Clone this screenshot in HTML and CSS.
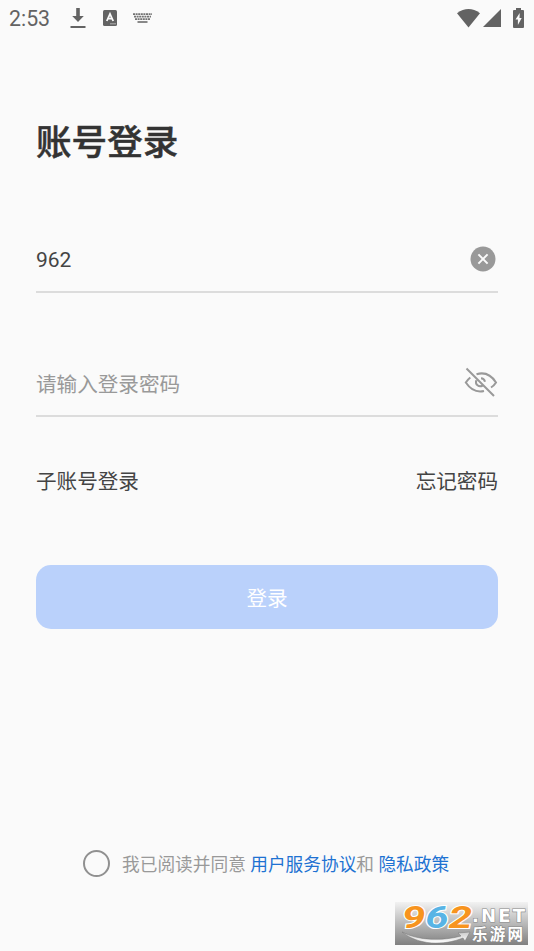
FILE: index.html
```html
<!DOCTYPE html>
<html lang="zh-CN">
<head>
<meta charset="utf-8">
<title>账号登录</title>
<link rel="stylesheet" href="styles.css">
</head>
<body>
<div class="screen">
  <header class="status">
    <span class="time">2:53</span>
    <svg class="download" width="16" height="20" viewBox="0 0 16 20"><path d="M6.2 0h3.6v8h4L8 14 2.2 8h4zM.5 18h15v2H.5z"/></svg>
    <svg class="badge" width="14" height="16" viewBox="0 0 14 16"><rect width="14" height="16" rx="1.5"/><path class="cut" d="M3.8 11 7 4l3.2 7M5 8.7h4"/><path class="dots" d="M7.5 13.8h5"/></svg>
    <svg class="keyboard" width="19" height="10" viewBox="0 0 19 10"><path d="M0 1.2h19M1 3.7h17M2 6.2h15" stroke-dasharray="2 .6"/><path d="M4.5 9h10"/></svg>
    <span class="signals">
      <svg width="23" height="19" viewBox="0 0 23 19"><path d="M0 4.2Q11.5-4.2 23 4.2L11.5 18.5z"/></svg>
      <svg class="cell" width="18" height="18" viewBox="0 0 18 18"><path d="M18 0v18H0z"/></svg>
      <svg class="battery" width="11" height="20" viewBox="0 0 11 20"><path d="M3 0h5v2h2q1 0 1 1v16q0 1-1 1H1q-1 0-1-1V3q0-1 1-1h2z"/><path class="bolt" d="M6.7 5 2.5 11.5h2.4V17l3.8-7H6.5z"/></svg>
    </span>
  </header>
  <main>
    <h1>账号登录</h1>
    <div class="field account">
      <span>962</span>
      <svg class="clear" width="26" height="26" viewBox="0 0 26 26"><circle cx="13" cy="13" r="12.5"/><path d="m8.4 8.4 9.2 9.2m0-9.2-9.2 9.2"/></svg>
    </div>
    <div class="field password">
      <span>请输入登录密码</span>
      <svg class="eye" width="34" height="32" viewBox="0 0 34 32"><path d="M2.5 2.5 30 30M12.5 8.2C21 5.7 27.8 9.8 32 16.5q-2 3.2-5 5M6.3 11.5q-2.5 2-4.5 5C6.2 23 12.5 26.8 20 25M12.3 14.2c-1.5 4.4 2.6 7.3 6.3 5.3M17 12.3q3.3.2 4 3.4"/></svg>
    </div>
    <div class="links"><span>子账号登录</span><span>忘记密码</span></div>
    <button class="login">登录</button>
    <div class="agreement">
      <i class="radio"></i>
      <span class="terms">我已阅读并同意 <b>用户服务协议</b>和 <b>隐私政策</b></span>
    </div>
  </main>
  <svg class="watermark" width="133" height="43" viewBox="0 0 133 43">
    <defs>
      <linearGradient id="bg" x2="0" y2="1"><stop stop-color="#f2f2f2"/><stop offset="1" stop-color="#808080"/></linearGradient>
      <linearGradient id="swoosh" x2="0" y2="1"><stop stop-color="#ccc"/><stop offset="1" stop-color="#fff"/></linearGradient>
    </defs>
    <rect width="133" height="43" fill="url(#bg)"/>
    <path d="M7 30C24 39 48 39 66 34l-3-3 12-1-5 9-2-3C48 44 23 43 7 30z" fill="url(#swoosh)" stroke="#777" stroke-width=".5"/>
    <text class="digits" x="7" y="26" textLength="70" lengthAdjust="spacingAndGlyphs"><tspan class="orange">9</tspan><tspan class="blue">6</tspan><tspan class="orange">2</tspan></text>
    <text class="net" x="77" y="19.5" textLength="53" lengthAdjust="spacing">.NET</text>
    <text class="site" x="77" y="37.5" textLength="51">乐游网</text>
  </svg>
</div>
</body>
</html>
```
FILE: styles.css
```css
* { box-sizing: border-box; }
body {
  margin: 0;
  background: #fafafa;
  color: #444;
  font-family: Roboto, "Noto Sans CJK SC", sans-serif;
}
svg { display: block; flex: none; }
.screen { position: relative; height: 951px; overflow: hidden; }
.status {
  display: flex;
  align-items: center;
  height: 36px;
  padding: 0 10px 0 9px;
  color: #636363;
  fill: #636363;
}
.time { width: 61px; font-size: 21.3px; line-height: 36px; padding-top: 1px; }
.badge { margin-left: 17px; }
.cut { fill: none; stroke: #fafafa; stroke-width: 1.8; }
.dots { stroke: #fafafa; stroke-width: 1; stroke-dasharray: 1 1; }
.keyboard { margin-left: 16px; fill: none; stroke: #737373; stroke-width: 1.7; }
.signals { display: flex; align-items: center; margin-left: auto; }
.cell { margin-left: 3px; }
.battery { margin-left: 12px; }
.bolt { fill: #fafafa; }
main { padding: 0 36px; }
h1 {
  margin: 80px 0 0;
  color: #333;
  font-size: 35.6px;
  line-height: 54px;
  font-weight: 500;
  -webkit-text-stroke: .5px #333;
}
.field {
  display: flex;
  align-items: center;
  justify-content: space-between;
  height: 68px;
  border-bottom: 2px solid #dcdcdc;
  font-size: 20.6px;
}
.account { margin-top: 55px; font-size: 21px; }
.account span { padding-top: 4px; }
.password { margin-top: 56px; color: #999; }
.password span { padding-top: 1px; }
.clear { margin-right: 2px; margin-top: 1px; fill: #999; }
.clear path { stroke: #fafafa; stroke-width: 2; }
.eye { fill: none; stroke: #999; stroke-width: 2; }
.links {
  display: flex;
  justify-content: space-between;
  margin-top: 49px;
  font-size: 20.6px;
  line-height: 32px;
}
.login {
  display: block;
  width: 100%;
  height: 64px;
  margin-top: 67px;
  padding: 0;
  border: 0;
  border-radius: 15px;
  background: #bad1fb;
  color: #fff;
  font: inherit;
  font-size: 20.6px;
}
.agreement {
  display: flex;
  align-items: center;
  height: 28px;
  margin-top: 220px;
  padding-left: 47px;
  font-size: 17.7px;
  color: #999;
  white-space: nowrap;
}
.radio { width: 27px; height: 27px; margin-right: 12px; border: 2px solid #909090; border-radius: 50%; }
.terms b { font-weight: 400; color: #1e72d2; }
.watermark { position: absolute; left: 395px; top: 902px; }
.digits { font: italic 700 31px Roboto, sans-serif; stroke: #fff; stroke-width: 2; paint-order: stroke; }
.orange { fill: #f7941e; }
.blue { fill: #58b4e5; }
.net { font: 700 19px "DejaVu Sans", sans-serif; font-size: 18px; fill: #fff; stroke: #888; stroke-width: 1.2; paint-order: stroke; }
.site { font: 700 15.5px "Noto Sans CJK SC", sans-serif; fill: #fff; stroke: #888; stroke-width: 1.2; paint-order: stroke; }
```
